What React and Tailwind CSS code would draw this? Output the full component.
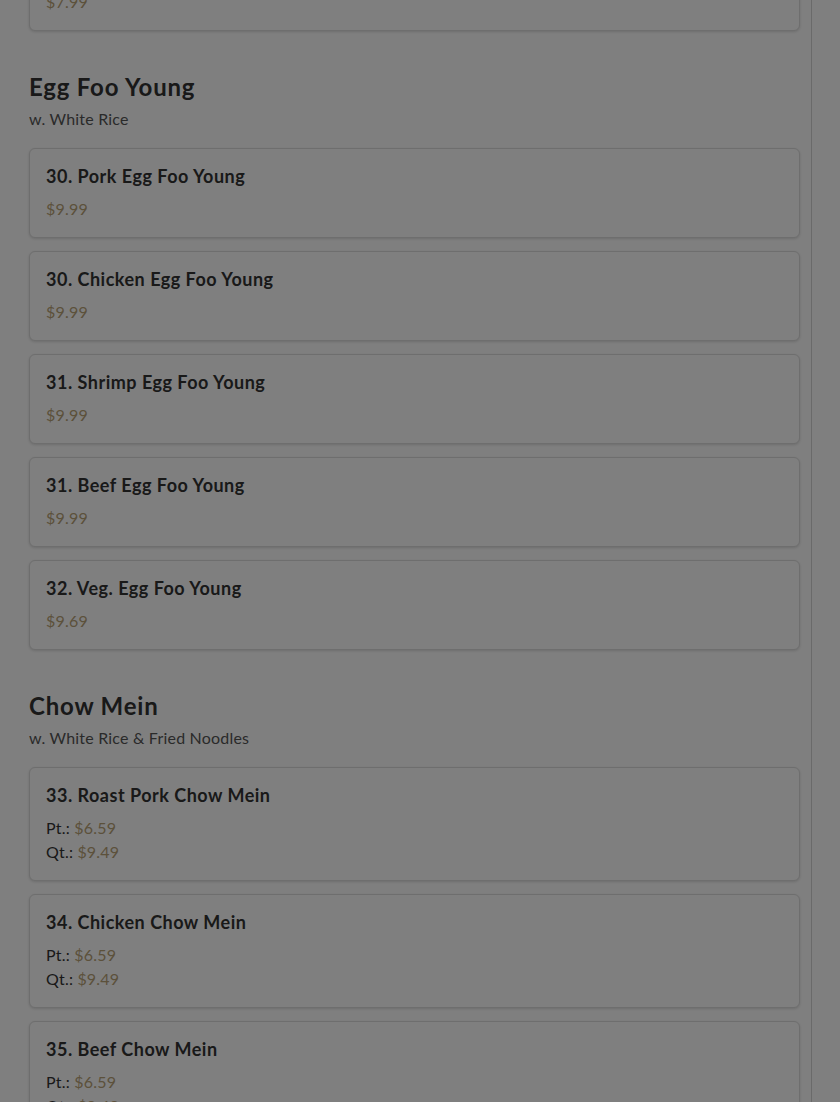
import React from "react";

const font = { fontFamily: "Lato, 'Open Sans', 'Noto Sans', sans-serif" };

function Price({ children }) {
  return <span className="text-[#b8a276]">{children}</span>;
}

function Card({ title, price, pt, qt }) {
  return (
    <div className="rounded-[6px] border border-[#dcdcdc] bg-white px-4 py-4 shadow-[0_1px_3px_rgba(0,0,0,0.15)]">
      <div className="h-[22px] text-[18px] font-bold leading-[22px] tracking-[0.5px] text-[#333]">{title}</div>
      <div className="mt-[10px] text-[16px] leading-[24px] tracking-[0.2px] text-[#333]">
        {price ? (
          <Price>{price}</Price>
        ) : (
          <>
            <div>
              Pt.: <Price>{pt}</Price>
            </div>
            <div>
              Qt.: <Price>{qt}</Price>
            </div>
          </>
        )}
      </div>
    </div>
  );
}

function Section({ title, subtitle, children }) {
  return (
    <section className="pt-[41px]">
      <h2 className="h-[29px] text-[24px] font-bold leading-[29px] tracking-[0.8px] text-[#333]">{title}</h2>
      <p className="mt-[6px] text-[16px] leading-[24px] tracking-[0.2px] text-[#555]">{subtitle}</p>
      <div className="mt-[17px] flex flex-col gap-[13px]">{children}</div>
    </section>
  );
}

export default function App() {
  return (
    <div className="relative h-[1102px] w-[840px] overflow-hidden bg-white" style={font}>
      <div className="flex h-full w-[812px] flex-col border-r border-[#d4d4d4] pl-[29px] pr-[11px]">
        <div className="mt-[-59px] flex flex-col gap-[13px]">
          <Card title="29. Vegetable Lo Mein" price="$7.99" />
        </div>
        <Section title="Egg Foo Young" subtitle="w. White Rice">
          <Card title="30. Pork Egg Foo Young" price="$9.99" />
          <Card title="30. Chicken Egg Foo Young" price="$9.99" />
          <Card title="31. Shrimp Egg Foo Young" price="$9.99" />
          <Card title="31. Beef Egg Foo Young" price="$9.99" />
          <Card title="32. Veg. Egg Foo Young" price="$9.69" />
        </Section>
        <Section title="Chow Mein" subtitle="w. White Rice & Fried Noodles">
          <Card title="33. Roast Pork Chow Mein" pt="$6.59" qt="$9.49" />
          <Card title="34. Chicken Chow Mein" pt="$6.59" qt="$9.49" />
          <Card title="35. Beef Chow Mein" pt="$6.59" qt="$9.49" />
        </Section>
      </div>
      <div className="absolute inset-0 bg-black/50" />
    </div>
  );
}
